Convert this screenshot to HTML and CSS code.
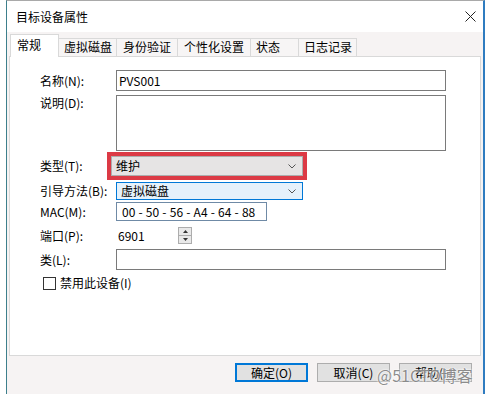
FILE: index.html
```html
<!DOCTYPE html>
<html>
<head>
    <title>目标设备属性</title>
    <meta charset="utf-8">
    <link rel="stylesheet" href="styles.css">
</head>
<body>
    <div class="window">
        <div class="titlebar">
            <span class="title">目标设备属性</span>
            <svg class="close" width="11" height="11" viewBox="0 0 11 11">
                <path d="M0.5 0.5 L10.5 10.5 M10.5 0.5 L0.5 10.5" stroke="#222" stroke-width="1" fill="none"/>
            </svg>
        </div>
        <div class="dialog-body">
            <div class="tabs">
                <div class="tab active">常规</div>
                <div class="tab">虚拟磁盘</div>
                <div class="tab tab-wide">身份验证</div>
                <div class="tab tab-wide">个性化设置</div>
                <div class="tab tab-state">状态</div>
                <div class="tab">日志记录</div>
            </div>
            <div class="panel">
                <div class="form">
                    <div class="row">
                        <span class="label">名称(N):</span>
                        <div class="field field-long">PVS001</div>
                    </div>
                    <div class="row row-top">
                        <span class="label">说明(D):</span>
                        <div class="field field-long field-area"></div>
                    </div>
                    <div class="row row-snug">
                        <span class="label label-short">类型(T):</span>
                        <div class="highlight">
                            <div class="combo combo-grey">
                                <span>维护</span>
                                <svg width="8" height="5" viewBox="0 0 8 5"><path d="M0.5 0.5 L4 4 L7.5 0.5" stroke="#555" fill="none"/></svg>
                            </div>
                        </div>
                    </div>
                    <div class="row row-close">
                        <span class="label">引导方法(B):</span>
                        <div class="combo combo-focus">
                            <span>虚拟磁盘</span>
                            <svg width="8" height="5" viewBox="0 0 8 5"><path d="M0.5 0.5 L4 4 L7.5 0.5" stroke="#555" fill="none"/></svg>
                        </div>
                    </div>
                    <div class="row row-close">
                        <span class="label">MAC(M):</span>
                        <div class="field field-mac">00 - 50 - 56 - A4 - 64 - 88</div>
                    </div>
                    <div class="row row-loose">
                        <span class="label">端口(P):</span>
                        <div class="field field-port">
                            <span>6901</span>
                            <div class="spinner">
                                <div class="spin-half"><svg width="5" height="3" viewBox="0 0 5 3"><path d="M0 3 L2.5 0 L5 3 Z" fill="#333"/></svg></div>
                                <div class="spin-half"><svg width="5" height="3" viewBox="0 0 5 3"><path d="M0 0 L2.5 3 L5 0 Z" fill="#333"/></svg></div>
                            </div>
                        </div>
                    </div>
                    <div class="row">
                        <span class="label">类(L):</span>
                        <div class="field field-long"></div>
                    </div>
                    <div class="row row-loose">
                        <span class="checkbox"></span>
                        <span class="check-label">禁用此设备(I)</span>
                    </div>
                </div>
            </div>
            <div class="buttons">
                <div class="button default">确定(O)</div>
                <div class="button">取消(C)</div>
                <div class="button">帮助(H)</div>
            </div>
        </div>
        <div class="watermark">@51CTO博客</div>
    </div>
</body>
</html>
```

FILE: styles.css
```css
body {
    margin: 0;
    background: #fff;
    font-family: "Noto Sans CJK SC", "Liberation Sans", sans-serif;
    font-size: 12px;
    line-height: 16px;
    color: #000;
}

.window {
    position: relative;
    margin-left: 6px;
    width: 479px;
    height: 394px;
    box-sizing: border-box;
    border-top: 1px solid #a9a9a9;
    border-left: 1px solid #3d7f8c;
    border-right: 2px solid #2f7cc0;
    background: #f6f3f3;
    overflow: hidden;
}

.titlebar {
    height: 31px;
    background: #fff;
    display: flex;
    align-items: center;
    justify-content: space-between;
    padding: 0 7px 0 9px;
}

.dialog-body {
    padding: 3px 2px 0 2px;
}

/* Tab strip */
.tabs {
    display: flex;
    align-items: flex-end;
    height: 21px;
    margin-left: 1px;
}

.tab {
    height: 17px;
    line-height: 16px;
    padding: 0 4px 0 5px;
    border: 1px solid #d9d9d9;
    border-bottom: none;
    border-left: none;
    background: #f7f5f5;
}

.tab-wide {
    padding: 0 6px;
}

.tab-state {
    min-width: 38px;
}

.tab.active {
    position: relative;
    z-index: 1;
    height: 22px;
    margin-bottom: -1px;
    padding: 0 17px 0 6px;
    border-left: 1px solid #d9d9d9;
    background: #fff;
    line-height: 20px;
}

.panel {
    height: 300px;
    box-sizing: border-box;
    background: #fff;
    border: 1px solid #d9d9d9;
}

/* Form rows */
.form {
    padding: 13px 0 0 30px;
}

.row {
    display: flex;
    align-items: center;
    margin-top: 4px;
}

.row:first-child {
    margin-top: 0;
}

.row-top {
    align-items: flex-start;
}

.row-snug {
    margin-top: 1px;
}

.row-close {
    margin-top: 2px;
}

.row-loose {
    margin-top: 5px;
}

.label {
    width: 76px;
    flex: 0 0 auto;
}

.label-short {
    width: 67px;
}

.field {
    box-sizing: border-box;
    height: 21px;
    border: 1px solid #7a7a7a;
    background: #fff;
    padding: 0 2px;
    line-height: 19px;
}

.field-long {
    width: 330px;
}

.field-area {
    height: 56px;
}

.field-mac {
    width: 151px;
    height: 19px;
    line-height: 17px;
    padding-left: 5px;
    border-color: #6f8aa6;
    word-spacing: 0.5px;
}

.field-port {
    width: 77px;
    height: 19px;
    line-height: 17px;
    padding: 0 0 0 1px;
    border-color: #fff;
    display: flex;
    justify-content: space-between;
    align-items: center;
}

.spinner {
    width: 14px;
    height: 17px;
    box-sizing: border-box;
    border: 1px solid #adadad;
    display: flex;
    flex-direction: column;
}

.spin-half {
    flex: 1;
    display: flex;
    align-items: center;
    justify-content: center;
    background: #e9e9e9;
}

.spin-half + .spin-half {
    border-top: 1px solid #adadad;
}

/* Drop-down lists */
.combo {
    box-sizing: border-box;
    display: flex;
    align-items: center;
    justify-content: space-between;
    padding: 0 6px 0 4px;
}

.combo-grey {
    width: 192px;
    height: 20px;
    background: #e6e4e4;
    border: 1px solid #adadad;
}

.combo-focus {
    width: 187px;
    height: 18px;
    background: #e5f1fb;
    border: 1px solid #0078d7;
}

/* Red annotation frame around the type list */
.highlight {
    border: 4px solid #dc3a45;
}

.checkbox {
    width: 13px;
    height: 13px;
    box-sizing: border-box;
    border: 1px solid #333;
    background: #fff;
    margin-left: 3px;
}

.check-label {
    margin-left: 4px;
}

/* Buttons */
.buttons {
    display: flex;
    justify-content: flex-end;
    gap: 9px;
    padding: 7px 9px 0 0;
}

.button {
    width: 73px;
    height: 19px;
    box-sizing: border-box;
    border: 1px solid #adadad;
    background: #e1e1e1;
    text-align: center;
    line-height: 17px;
}

.button.default {
    border-color: #0078d7;
    box-shadow: inset 0 0 0 1px #0078d7;
}

.watermark {
    position: absolute;
    left: 370px;
    top: 364px;
    font-size: 16px;
    line-height: 20px;
    color: rgba(120, 120, 120, 0.85);
    text-shadow: 0 0 2px #fff, 0 0 2px #fff;
}
```
